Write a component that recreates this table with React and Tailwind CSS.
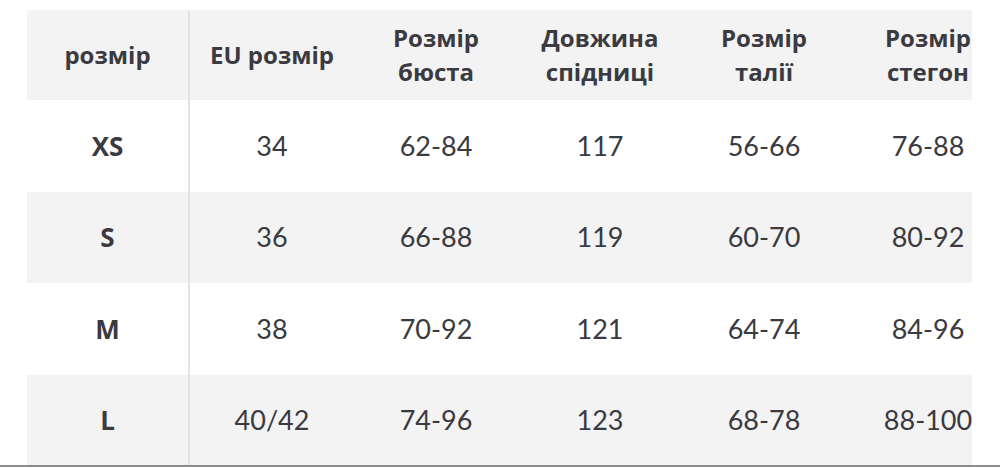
const headers = [
  ['розмір'],
  ['EU розмір'],
  ['Розмір', 'бюста'],
  ['Довжина', 'спідниці'],
  ['Розмір', 'талії'],
  ['Розмір', 'стегон'],
];

const rows = [
  ['XS', '34', '62-84', '117', '56-66', '76-88'],
  ['S', '36', '66-88', '119', '60-70', '80-92'],
  ['M', '38', '70-92', '121', '64-74', '84-96'],
  ['L', '40/42', '74-96', '123', '68-78', '88-100'],
];

function Cell({ first, children, className = '' }) {
  return (
    <div
      className={`flex items-center justify-center text-center ${
        first ? 'w-[163px] border-r-2 border-[#e3e3e5]' : 'w-[164px]'
      } ${className}`}
    >
      {children}
    </div>
  );
}

export default function App() {
  return (
    <div className="w-[1000px] h-[468px] bg-white overflow-hidden text-[#3a3a40] font-['Lato','Noto_Sans',sans-serif]">
      <div className="pt-[10px] pl-[27px]">
        <div className="w-[945px] overflow-hidden">
          <div className="w-[1000px]">
            <div className="flex h-[90px] bg-[#f3f3f4]">
              {headers.map((h, i) => (
                <Cell
                  key={i}
                  first={i === 0}
                  className="flex-col font-bold text-[24px] leading-[34px] font-['Open_Sans','Noto_Sans',sans-serif]"
                >
                  {h.map((line) => (
                    <span key={line}>{line}</span>
                  ))}
                </Cell>
              ))}
            </div>
            {rows.map((r, ri) => (
              <div
                key={ri}
                className={`flex ${ri === 3 ? 'h-[90px]' : ri === 1 ? 'h-[91px]' : 'h-[92px]'} ${
                  ri % 2 === 1 ? 'bg-[#f3f3f4]' : 'bg-white'
                }`}
              >
                {r.map((v, i) => (
                  <Cell
                    key={i}
                    first={i === 0}
                    className={
                      i === 0
                        ? "font-bold text-[26px] font-['Open_Sans','Noto_Sans',sans-serif]"
                        : 'text-[27px]'
                    }
                  >
                    {v}
                  </Cell>
                ))}
              </div>
            ))}
          </div>
        </div>
      </div>
      <div className="h-[2px] bg-[#8c8c90]" />
    </div>
  );
}
